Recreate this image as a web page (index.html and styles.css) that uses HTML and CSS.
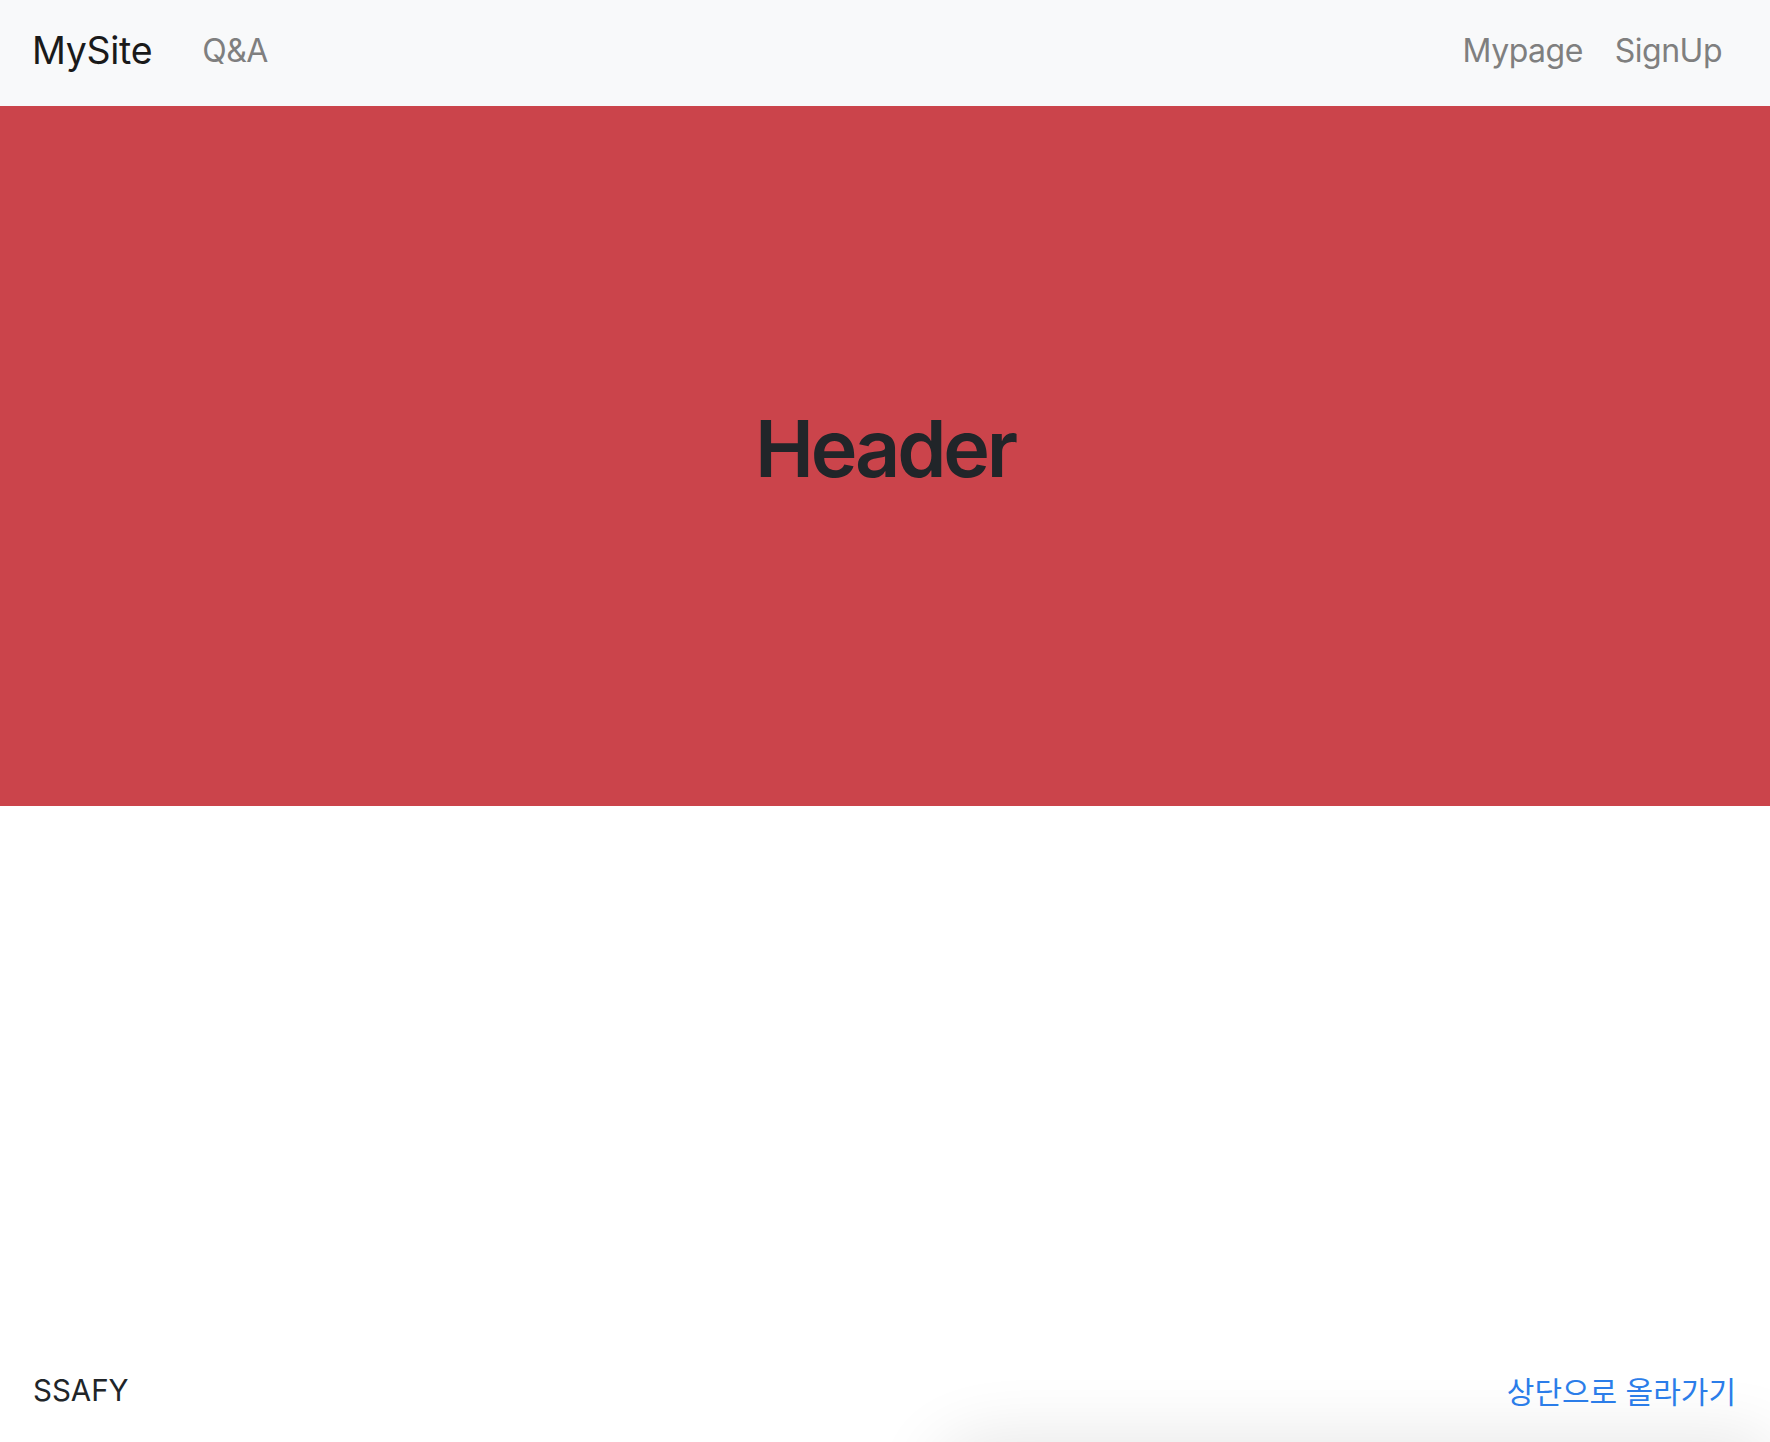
FILE: index.html
```html
<!DOCTYPE html>
<html lang="ko">
<head>
<meta charset="utf-8">
<title>MySite</title>
<link rel="stylesheet" href="styles.css">
</head>
<body>
<nav class="navbar">
  <div class="nav-left">
    <a class="brand" href="#">MySite</a>
    <a class="nav-link" href="#">Q&amp;A</a>
  </div>
  <div class="nav-right">
    <a class="nav-link" href="#">Mypage</a>
    <a class="nav-link" href="#">SignUp</a>
  </div>
</nav>
<header class="hero">
  <h1 class="hero-title">Header</h1>
</header>
<main class="content"></main>
<footer class="footer">
  <span class="footer-name">SSAFY</span>
  <a class="footer-top" href="#">상단으로 올라가기</a>
</footer>
<div class="bottom-shadow"></div>
</body>
</html>
```

FILE: styles.css
```css
html, body {
  margin: 0;
  padding: 0;
}
body {
  height: 100vh;
  display: flex;
  flex-direction: column;
  font-family: Inter, "Noto Sans CJK KR", sans-serif;
  background: #ffffff;
  color: #212529;
  overflow: hidden;
  position: relative;
}
a {
  text-decoration: none;
}
.navbar {
  height: 106px;
  background: #f8f9fa;
  display: flex;
  align-items: center;
  justify-content: space-between;
  padding: 0 48px 5px 32px;
  box-sizing: border-box;
}
.nav-left, .nav-right {
  display: flex;
  align-items: center;
}
.nav-left {
  gap: 50px;
}
.nav-right {
  gap: 32px;
}
.brand {
  font-size: 37.5px;
  color: #1a1a1a;
  letter-spacing: -0.3px;
}
.nav-link {
  font-size: 32px;
  color: #7f7f7f;
  letter-spacing: -0.5px;
}
.hero {
  height: 700px;
  background: #cb444b;
  display: flex;
  align-items: center;
  justify-content: center;
  padding-bottom: 16px;
  box-sizing: border-box;
}
.hero-title {
  margin: 0;
  font-size: 79px;
  font-weight: 600;
  color: #212529;
  letter-spacing: -3.2px;
}
.content {
  flex: 1;
}
.footer {
  height: 100px;
  display: flex;
  align-items: center;
  justify-content: space-between;
  padding: 0 34px 4px 33px;
  box-sizing: border-box;
  position: relative;
  z-index: 1;
}
.footer-name {
  font-size: 29.5px;
  color: #212529;
}
.footer-top {
  font-size: 30px;
  color: #2b7de9;
  font-family: "Noto Sans CJK KR", sans-serif;
}
.bottom-shadow {
  position: absolute;
  left: 930px;
  right: 0;
  bottom: -60px;
  height: 60px;
  border-radius: 80px 0 0 0;
  box-shadow: 0 0 70px rgba(0, 0, 0, 0.12);
  background: #eeeeee;
}
```
